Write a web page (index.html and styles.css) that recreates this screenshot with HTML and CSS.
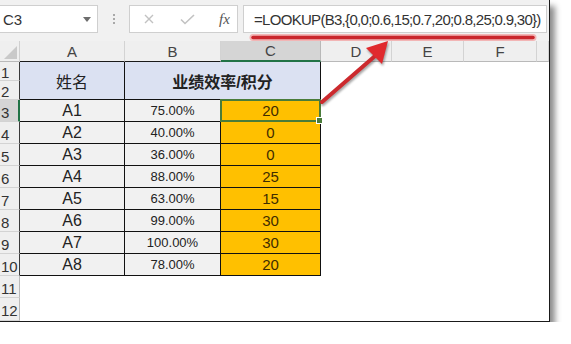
FILE: index.html
```html
<!DOCTYPE html>
<html lang="zh">
<head>
  <meta charset="UTF-8">
  <title>LOOKUP 积分</title>
  <link rel="stylesheet" href="styles.css">
</head>
<body>

<div class="window">
  <!-- Formula bar -->
  <div class="formula-bar">
    <div class="name-box">
      <span>C3</span>
      <svg class="drop" width="8" height="5" viewBox="0 0 8 5"><path d="M0 0H8L4 5Z" fill="#6d6d6d"/></svg>
    </div>
    <div class="grip"><i></i><i></i><i></i></div>
    <div class="fx-box">
      <svg width="10" height="10" viewBox="0 0 10 10"><path d="M1 1L9 9M9 1L1 9" stroke="#c2c2c2" stroke-width="1.4" fill="none"/></svg>
      <svg width="15" height="11" viewBox="0 0 15 11"><path d="M1 5.5L5 9.5L14 1" stroke="#c2c2c2" stroke-width="1.6" fill="none"/></svg>
      <span class="fx">fx</span>
    </div>
    <div class="formula">=LOOKUP(B3,{0,0;0.6,15;0.7,20;0.8,25;0.9,30})</div>
  </div>

  <!-- Sheet -->
  <div class="sheet">
    <div class="corner"><svg width="13" height="13" viewBox="0 0 13 13"><path d="M13 0V13H0Z" fill="#c9c9c9"/></svg></div>
    <div class="ch edge">A</div>
    <div class="ch edge">B</div>
    <div class="ch on">C</div>
    <div class="ch">D</div>
    <div class="ch">E</div>
    <div class="ch">F</div>
    <div class="ch"></div>

    <div class="rh edge">1</div>
    <div class="hd name">姓名</div>
    <div class="hd title">业绩效率/积分</div>
    <div class="rh edge">2</div>

    <div class="rh on">3</div>
    <div class="cell a">A1</div><div class="cell b">75.00%</div><div class="cell score active">20</div>
    <div class="rh edge">4</div>
    <div class="cell a">A2</div><div class="cell b">40.00%</div><div class="cell score">0</div>
    <div class="rh edge">5</div>
    <div class="cell a">A3</div><div class="cell b">36.00%</div><div class="cell score">0</div>
    <div class="rh edge">6</div>
    <div class="cell a">A4</div><div class="cell b">88.00%</div><div class="cell score">25</div>
    <div class="rh edge">7</div>
    <div class="cell a">A5</div><div class="cell b">63.00%</div><div class="cell score">15</div>
    <div class="rh edge">8</div>
    <div class="cell a">A6</div><div class="cell b">99.00%</div><div class="cell score">30</div>
    <div class="rh edge">9</div>
    <div class="cell a">A7</div><div class="cell b">100.00%</div><div class="cell score">30</div>
    <div class="rh edge">10</div>
    <div class="cell a">A8</div><div class="cell b">78.00%</div><div class="cell score">20</div>
    <div class="rh">11</div>
    <div class="rh">12</div>
  </div>

  <!-- Red annotation -->
  <svg class="marks" width="550" height="322" viewBox="0 0 550 322">
    <line x1="253" y1="37.5" x2="533" y2="37.5" stroke="#f2b5b5" stroke-width="7" stroke-linecap="round"/>
    <line x1="253" y1="37.5" x2="533" y2="37.5" stroke="#c9262c" stroke-width="3.5" stroke-linecap="round"/>
    <g class="arrow">
      <line x1="322" y1="102" x2="375" y2="56" stroke="#cc2a2e" stroke-width="4" stroke-linecap="round"/>
      <path d="M388 41L366 48L382 64Z" fill="#e02a2e"/>
    </g>
  </svg>
</div>

</body>
</html>
```

FILE: styles.css
```css
/* Basic Styles */
body {
  margin: 0;
  background-color: #fff;
  font-family: "Liberation Sans", "Noto Sans CJK SC", sans-serif;
  color: #222;
}
.window {
  position: relative;
  width: 549px;
  height: 321px;
  border-right: 1px solid #1a1a1a;
  border-bottom: 1px solid #1a1a1a;
  background-color: #fff;
  box-shadow: 5px 6px 6px rgba(0, 0, 0, 0.45);
  overflow: hidden;
}

/* Formula bar */
.formula-bar {
  display: flex;
  align-items: flex-start;
  height: 41px;
  padding-top: 5px;
  box-sizing: border-box;
  background-color: #f1f1f1;
}
.name-box,
.fx-box,
.formula {
  display: flex;
  align-items: center;
  flex-shrink: 0;
  height: 28px;
  box-sizing: border-box;
  background-color: #fff;
  border: 1px solid #cfcfcf;
}
.name-box {
  width: 98px;
  border-left: none;
  padding: 0 6px 0 3px;
  justify-content: space-between;
  font-size: 15px;
  color: #333;
}
.grip {
  flex-shrink: 0;
  width: 31px;
  height: 28px;
  display: flex;
  flex-direction: column;
  align-items: center;
  justify-content: center;
  gap: 2px;
}
.grip i {
  width: 2px;
  height: 2px;
  background-color: #a9a9a9;
}
.fx-box {
  width: 109px;
  padding-left: 14px;
  gap: 24px;
}
.fx-box svg + svg {
  margin-left: 2px;
}
.fx {
  font-family: "Liberation Serif", serif;
  font-style: italic;
  font-size: 15px;
  color: #555;
}
.formula {
  flex: 1 1 0;
  min-width: 0;
  overflow: hidden;
  margin: 0 2px 0 5px;
  padding-left: 10px;
  font-size: 15px;
  letter-spacing: -0.7px;
  color: #333;
  white-space: nowrap;
}

/* Sheet grid */
.sheet {
  display: grid;
  grid-template-columns: 20px 105px 96px 100px 71px 72px 73px 12px;
  grid-template-rows: 21px 19px 19px repeat(9, 22px) 23px;
  height: 280px;
  background-color: #fff;
}
.sheet > div {
  display: flex;
  align-items: center;
  justify-content: center;
  box-sizing: border-box;
}
.corner {
  background-color: #efefef;
  border-right: 1px solid #d0d0d0;
  border-bottom: 1px solid #b9b9b9;
  align-items: flex-end !important;
  justify-content: flex-end !important;
  padding: 0 2px 2px 0;
}
.ch {
  background-color: #efefef;
  border-right: 1px solid #d3d3d3;
  border-bottom: 1px solid #b9b9b9;
  font-size: 15px;
  color: #444;
}
.ch.edge {
  border-bottom-color: #1a1a1a;
}
.ch.on {
  background-color: #d5d5d5;
  border-bottom: 2px solid #217346;
  border-right-color: #b9b9b9;
}
.rh {
  grid-column: 1;
  justify-content: flex-start !important;
  padding-left: 1px;
  padding-top: 3px;
  background-color: #efefef;
  border-right: 1px solid #b9b9b9;
  border-bottom: 1px solid #d3d3d3;
  font-size: 15px;
  color: #333;
}
.rh.edge {
  border-right-color: #3a3a3a;
}
.rh.on {
  background-color: #d5d5d5;
  border-right: 2px solid #217346;
}

/* Table cells */
.hd {
  background-color: #dbe1f2;
  border-right: 1px solid #111;
  border-bottom: 1px solid #111;
  grid-row: span 2;
  font-size: 16px;
}
.hd.name {
  grid-column: 2;
}
.hd.title {
  grid-column: 3 / span 2;
  font-weight: bold;
}
.cell {
  border-right: 1px solid #111;
  border-bottom: 1px solid #111;
}
.a {
  grid-column: 2;
  background-color: #f1f1f1;
  font-size: 16px;
}
.b {
  grid-column: 3;
  background-color: #f1f1f1;
  font-size: 13px;
}
.score {
  grid-column: 4;
  background-color: #ffc000;
  color: #3f2c00;
  font-size: 15px;
}
.score.active {
  position: relative;
}
.score.active::after {
  content: "";
  position: absolute;
  left: -1px;
  top: -1px;
  right: -1px;
  bottom: -1px;
  border: 2px solid #4a7c3a;
}
.score.active::before {
  content: "";
  position: absolute;
  right: -3px;
  bottom: -3px;
  width: 5px;
  height: 5px;
  background-color: #4a7c3a;
  border: 1px solid #fff;
  z-index: 1;
}

/* Annotation */
.marks {
  position: absolute;
  left: 0;
  top: 0;
  pointer-events: none;
}
.arrow {
  filter: drop-shadow(1px 2px 1px rgba(0, 0, 0, 0.35));
}
```
